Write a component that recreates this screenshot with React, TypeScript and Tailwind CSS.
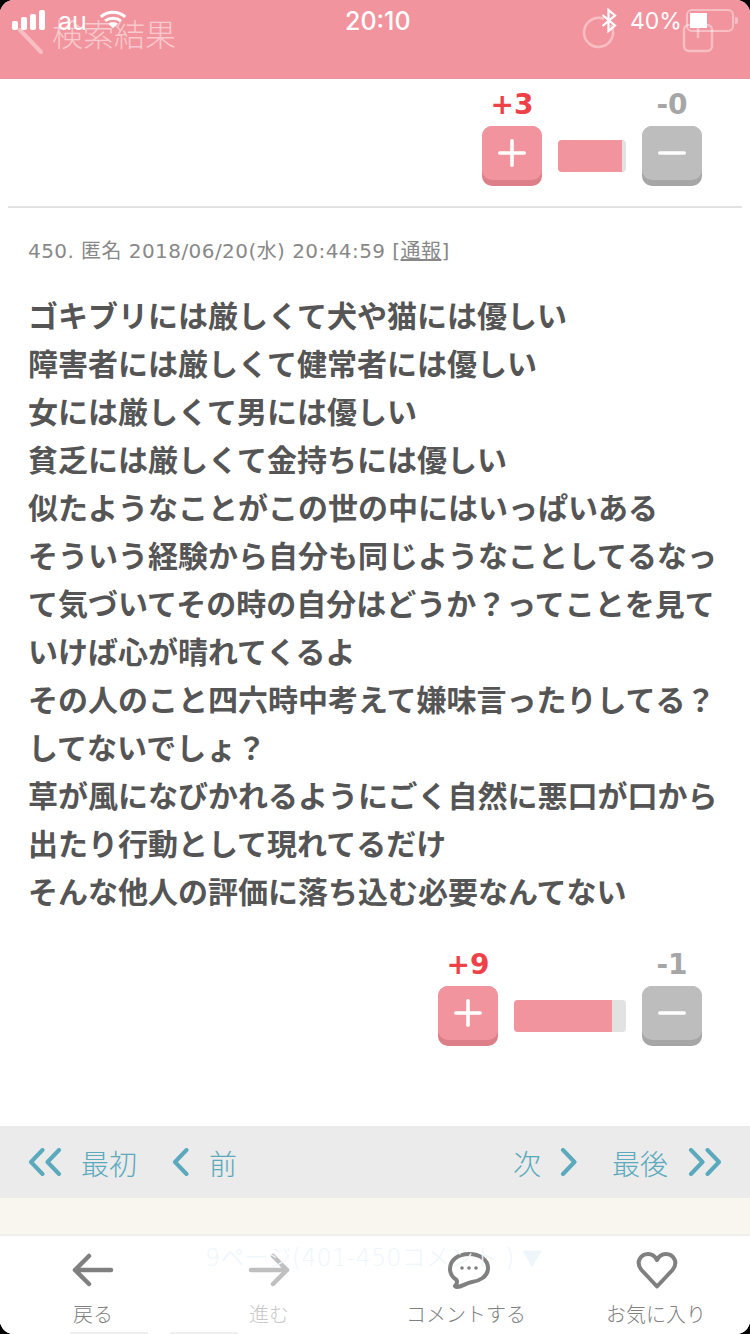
const sans = '"Noto Sans CJK JP", "Noto Sans", sans-serif';
const wide = '"DejaVu Sans", "Noto Sans CJK JP", sans-serif';
const lines = [
  'ゴキブリには厳しくて犬や猫には優しい',
  '障害者には厳しくて健常者には優しい',
  '女には厳しくて男には優しい',
  '貧乏には厳しくて金持ちには優しい',
  '似たようなことがこの世の中にはいっぱいある',
  'そういう経験から自分も同じようなことしてるなっ',
  'て気づいてその時の自分はどうか？ってことを見て',
  'いけば心が晴れてくるよ',
  'その人のこと四六時中考えて嫌味言ったりしてる？',
  'してないでしょ？',
  '草が風になびかれるようにごく自然に悪口が口から',
  '出たり行動として現れてるだけ',
  'そんな他人の評価に落ち込む必要なんてない',
];

function Key({ kind }: { kind: 'plus' | 'minus' }) {
  const plus = kind === 'plus';
  return (
    <div className={`w-[60px] h-[60px] rounded-[10px] ${plus ? 'bg-[#dd7f88]' : 'bg-[#a6a6a6]'}`}>
      <div className={`w-[60px] h-[54px] rounded-[10px] flex items-center justify-center ${plus ? 'bg-[#f2949d]' : 'bg-[#bdbdbd]'}`}>
        <svg width="30" height="30" viewBox="0 0 30 30">
          <rect x="1" y="13.2" width="28" height="3.6" rx="1.8" fill="#fff" />
          {plus && <rect x="13.2" y="1" width="3.6" height="28" rx="1.8" fill="#fff" />}
        </svg>
      </div>
    </div>
  );
}

function Vote({ plus, minus, barW, fillW }: { plus: string; minus: string; barW: string; fillW: string }) {
  return (
    <div className="flex justify-end pr-[48px]">
      <div className="flex items-end gap-[16px]">
        <div className="flex flex-col items-center w-[60px]">
          <div className="text-[28px] leading-[40px] mb-px font-bold text-[#ee4249]" style={{ fontFamily: '"DejaVu Sans", sans-serif' }}>{plus}</div>
          <Key kind="plus" />
        </div>
        <div className={`h-[32px] mb-[14px] rounded-[4px] bg-[#e2e2e2] overflow-hidden ${barW}`}>
          <div className={`h-full bg-[#f2949d] ${fillW}`} />
        </div>
        <div className="flex flex-col items-center w-[60px]">
          <div className="text-[28px] leading-[40px] mb-px font-bold text-[#a6a6a6]" style={{ fontFamily: '"DejaVu Sans", sans-serif' }}>{minus}</div>
          <Key kind="minus" />
        </div>
      </div>
    </div>
  );
}

function Chev({ dir, double }: { dir: 'l' | 'r'; double?: boolean }) {
  const pts = dir === 'l' ? ['M14.5 2 L3 14 L14.5 26', 'M31 2 L19.5 14 L31 26'] : ['M3 2 L14.5 14 L3 26', 'M19.5 2 L31 14 L19.5 26'];
  const single = dir === 'l' ? 'M14.5 2 L3 14 L14.5 26' : 'M3 2 L14.5 14 L3 26';
  return (
    <svg width={double ? 34 : 17} height="28" viewBox={double ? '0 0 34 28' : '0 0 17 28'} fill="none" stroke="#5aa9bd" strokeWidth="4" strokeLinecap="round" strokeLinejoin="round">
      {double ? <><path d={pts[0]} /><path d={pts[1]} /></> : <path d={single} />}
    </svg>
  );
}

function TabItem({ label, color, className, children }: { label: string; color: string; className: string; children: React.ReactNode }) {
  return (
    <div className={`flex flex-col items-center ${className}`}>
      <div className="h-[38px] flex items-center justify-center">{children}</div>
      <div className="text-[20px] leading-[30px] mt-[10px] font-light whitespace-nowrap" style={{ color }}>{label}</div>
    </div>
  );
}

export default function App() {
  return (
    <div className="relative w-[750px] h-[1334px] overflow-hidden bg-black" style={{ fontFamily: sans }}>
      <div className="w-full h-full bg-white rounded-[14px] overflow-hidden flex flex-col">
        {/* header */}
        <div className="relative h-[79px] shrink-0 bg-[#f2949d]">
          <svg className="absolute left-[16px] top-[26px] opacity-40" width="30" height="30" viewBox="0 0 30 30" fill="none" stroke="#fff" strokeWidth="4" strokeLinecap="round"><path d="M4 4 L25 26" /></svg>
          <span className="absolute left-[52px] top-[11px] text-[31px] leading-[44px] font-light text-white/50">検索結果</span>
          <svg className="absolute left-[580px] top-[15px] opacity-40" width="36" height="36" viewBox="0 0 36 36" fill="none" stroke="#fff" strokeWidth="2.5"><path d="M24 4 A14.5 14.5 0 1 0 31 10" /></svg>
          <svg className="absolute left-[680px] top-[20px] opacity-40" width="36" height="34" viewBox="0 0 36 34" fill="none" stroke="#fff" strokeWidth="2.5"><rect x="4" y="5" width="28" height="26" rx="5" /><path d="M18 0 V18" /></svg>
          {/* status bar */}
          <div className="absolute inset-x-0 top-0 h-[40px] text-white">
            <div className="absolute left-[12px] top-[10px] flex items-end gap-[3px]">
              <div className="w-[6px] h-[9px] rounded-[2px] bg-white" />
              <div className="w-[6px] h-[13px] rounded-[2px] bg-white" />
              <div className="w-[6px] h-[16px] rounded-[2px] bg-white" />
              <div className="w-[6px] h-[20px] rounded-[2px] bg-white" />
            </div>
            <span className="absolute left-[58px] top-[5px] text-[25px] leading-[32px]" style={{ fontFamily: 'Inter, sans-serif' }}>au</span>
            <svg className="absolute left-[99px] top-[10px]" width="28" height="19" viewBox="0 0 32 20" fill="none" stroke="#fff" strokeWidth="3.4"><path d="M2 7 C10 0 22 0 30 7" /><path d="M7 11.5 C12 7.5 20 7.5 25 11.5" /><path d="M16 20 L10.5 14.8 C13.5 12.6 18.5 12.6 21.5 14.8 Z" fill="#fff" stroke="none" /></svg>
            <span className="absolute left-[345px] top-[5px] text-[25px] leading-[32px] font-medium" style={{ fontFamily: 'Inter, sans-serif' }}>20:10</span>
            <svg className="absolute left-[601px] top-[8px]" width="16" height="25" viewBox="0 0 16 25" fill="none" stroke="#fff" strokeWidth="2.2"><path d="M1.5 7 L14 17.5 L7.5 23 V2 L14 7.5 L1.5 18" /></svg>
            <span className="absolute left-[630px] top-[5px] text-[23px] leading-[32px]" style={{ fontFamily: 'Inter, sans-serif' }}>40%</span>
            <div className="absolute left-[686px] top-[9px] w-[48px] h-[23px] rounded-[6px] border-2 border-white/40 pl-[2px] pt-[2px]">
              <div className="w-[17px] h-[15px] bg-white" />
            </div>
            <div className="absolute left-[735px] top-[17px] w-[3px] h-[7px] bg-white/40 rounded-r-[2px]" />
          </div>
        </div>

        {/* upper vote */}
        <div className="pt-[6px]">
          <Vote plus="+3" minus="-0" barW="w-[68px]" fillW="w-[64px]" />
        </div>
        <div className="mx-[8px] mt-[20px] h-[2px] bg-[#e2e2e2]" />

        {/* comment */}
        <div className="pl-[28px] pt-[28px] text-[20px] leading-[30px] tracking-[0.44px] text-[#888] whitespace-nowrap" style={{ fontFamily: wide }}>
          450. 匿名 2018/06/20(水) 20:44:59 [<span className="underline">通報</span>]
        </div>
        <div className="pl-[28px] pt-[24px] text-[30px] leading-[48px] font-bold text-[#555] whitespace-nowrap">
          {lines.map((l) => <div key={l}>{l}</div>)}
        </div>

        {/* lower vote */}
        <div className="pt-[31px]">
          <Vote plus="+9" minus="-1" barW="w-[112px]" fillW="w-[98px]" />
        </div>

        {/* pager */}
        <div className="mt-[80px] h-[72px] bg-[#ebebeb] shrink-0 flex items-center justify-between px-[28px] text-[28px] font-light text-[#5aa9bd]">
          <div className="flex items-center">
            <Chev dir="l" double />
            <span className="ml-[19px] pt-[2px]">最初</span>
            <span className="ml-[35px]"><Chev dir="l" /></span>
            <span className="ml-[20px] pt-[2px]">前</span>
          </div>
          <div className="flex items-center">
            <span className="pt-[2px]">次</span>
            <span className="ml-[19px]"><Chev dir="r" /></span>
            <span className="ml-[35px] pt-[2px]">最後</span>
            <span className="ml-[20px]"><Chev dir="r" double /></span>
          </div>
        </div>

        {/* page select + tab bar */}
        <div className="relative flex-1 bg-[#f9f5ef]">
          <div className="absolute inset-x-0 top-[36px] bottom-0 bg-white border-t-2 border-[#eeeeee] flex pt-[15px]">
            <TabItem label="戻る" color="#808080" className="w-[186px]">
              <svg width="44" height="36" viewBox="0 0 44 36" fill="none" stroke="#808080" strokeWidth="4.5" strokeLinecap="round" strokeLinejoin="round"><path d="M40 18 H4 M18 4 L4 18 L18 32" /></svg>
            </TabItem>
            <TabItem label="進む" color="#c8c8c8" className="w-[166px]">
              <svg width="44" height="36" viewBox="0 0 44 36" fill="none" stroke="#bfbfbf" strokeWidth="4.5" strokeLinecap="round" strokeLinejoin="round"><path d="M4 18 H40 M26 4 L40 18 L26 32" /></svg>
            </TabItem>
            <TabItem label="コメントする" color="#808080" className="w-[228px]">
              <svg className="ml-[6px]" width="42" height="38" viewBox="0 0 42 38" fill="none"><path d="M7 35 C9 33 9.5 31 8.5 29 C4 26 2 22 2 18 C2 9 10 3 21 3 C32 3 40 9 40 17 C40 26 31 30 24 31 C18 32 14 36 9 36 C8 36 7.5 35.5 7 35 Z" stroke="#808080" strokeWidth="4" strokeLinejoin="round" /><circle cx="14" cy="17" r="1.8" fill="#808080" /><circle cx="21" cy="17" r="1.8" fill="#808080" /><circle cx="28" cy="17" r="1.8" fill="#808080" /></svg>
            </TabItem>
            <TabItem label="お気に入り" color="#808080" className="w-[152px]">
              <svg className="ml-[2px]" width="42" height="38" viewBox="0 0 42 38" fill="none" stroke="#808080" strokeWidth="4" strokeLinejoin="round"><path d="M21 35.5 L5.5 19 C-1 11 5 3 12 3 C16 3 19 5 21 9 C23 5 26 3 30 3 C37 3 43 11 36.5 19 Z" /></svg>
            </TabItem>
          </div>
          <div className="absolute left-[205px] top-[44px] text-[24px] leading-[32px] font-light text-[#eef6fb] whitespace-nowrap" style={{ fontFamily: wide }}>9ページ(401-450コメント ) <span className="text-[20px]" style={{ fontFamily: sans }}>▼</span></div>
          <div className="absolute left-[70px] bottom-0 w-[78px] h-[2px] bg-[#efefef]" />
          <div className="absolute left-[170px] bottom-0 w-[68px] h-[2px] bg-[#efefef]" />
        </div>
      </div>
    </div>
  );
}
